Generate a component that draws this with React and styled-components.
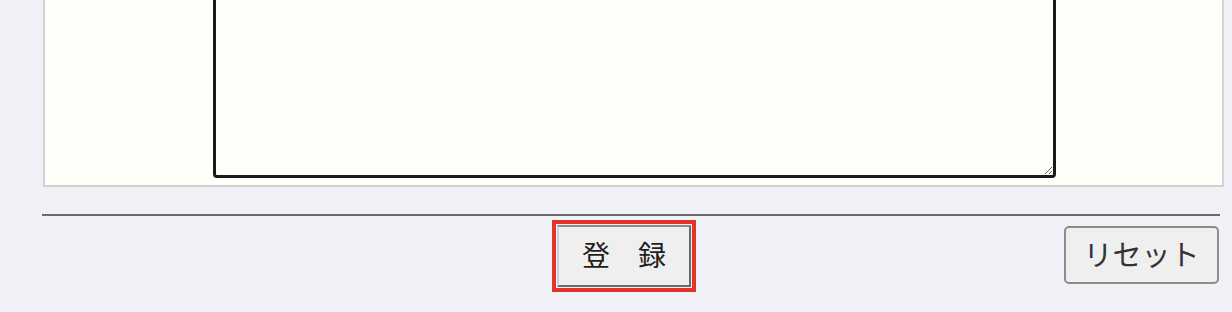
import styled, { createGlobalStyle } from "styled-components";

const GlobalStyle = createGlobalStyle`
	html, body {
		margin: 0;
		padding: 0;
		background: #f0f1f6;
		font-family: "Noto Sans CJK JP", "Noto Sans", sans-serif;
		overflow: hidden;
	}
`;

const App = () => {
	return (
		<Page>
			<GlobalStyle />
			<Panel>
				<Memo name="memo" />
			</Panel>
			<Rule />
			<ButtonRow>
				<SubmitButton type="submit">登　録</SubmitButton>
				<ResetButton type="reset">リセット</ResetButton>
			</ButtonRow>
		</Page>
	);
};

export default App;

const Page = styled.div`
	width: 1232px;
	height: 312px;
	padding: 0 10px 0 42px;
	box-sizing: border-box;
	overflow: hidden;
`;

const Panel = styled.div`
	margin-top: -20px;
	margin-right: -2px;
	margin-left: 1px;
	height: 207px;
	box-sizing: border-box;
	background: #fffffa;
	border: 2px solid #d2d2d2;
	border-top: none;
	padding: 0 0 7px 168px;
	display: flex;
	align-items: flex-end;
`;

const Memo = styled.textarea`
	width: 843px;
	height: 190px;
	box-sizing: border-box;
	border: 3px solid #1a1a1a;
	border-radius: 4px;
	background: #fffffa;
	outline: none;
	resize: both;
	display: block;
`;

const Rule = styled.hr`
	margin: 27px 2px 0 0;
	border: none;
	border-top: 2px solid #6b6b6b;
	height: 0;
`;

const ButtonRow = styled.div`
	display: flex;
	align-items: flex-start;
	justify-content: space-between;
`;

const SubmitButton = styled.button`
	margin: 9px 0 0 515px;
	width: 134px;
	height: 62px;
	box-sizing: border-box;
	background: #efefef;
	border: 2px solid;
	border-color: #8a8a8a #6a6a6a #6a6a6a #cfcfcf;
	border-radius: 0;
	font-family: inherit;
	font-size: 28px;
	color: #1e1e1e;
	padding: 0 0 4px;
	outline: 4px solid #e4332a;
	outline-offset: 1px;
`;

const ResetButton = styled.button`
	margin: 10px 3px 0 0;
	width: 155px;
	height: 58px;
	box-sizing: border-box;
	background: #efefef;
	border: 2px solid #8c8c8c;
	border-radius: 5px;
	font-family: inherit;
	font-size: 29px;
	color: #333;
	padding: 0 0 4px;
`;
